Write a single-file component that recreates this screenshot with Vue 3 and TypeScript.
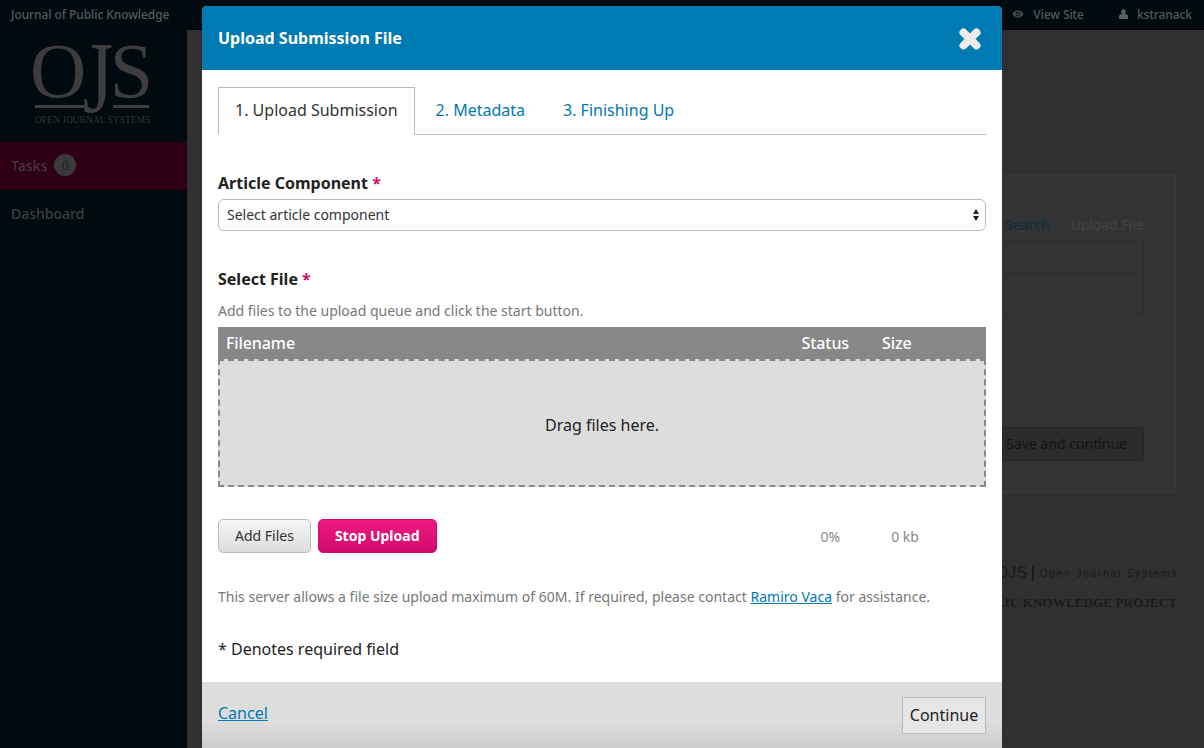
<template>
  <div class="page">
    <header class="topbar">
      <span class="journal">Journal of Public Knowledge</span>
      <nav class="user-nav">
        <span class="nav-item">
          <svg class="nav-icon" width="12" height="8" viewBox="0 0 14 10">
            <path d="M0 5C2 1.800 4.400.4 7 .4S12 1.800 14 5c-2 3.200-4.400 4.600-7 4.600S2 8.200 0 5z" fill="#45494b" />
            <circle cx="7" cy="5" r="2.900" fill="#010a0f" />
            <circle cx="7" cy="5" r="1.900" fill="#45494b" />
          </svg>
          View Site
        </span>
        <span class="nav-item">
          <svg class="nav-icon" width="9" height="10" viewBox="0 0 10 11">
            <circle cx="5" cy="3" r="2.700" fill="#5a5e60" />
            <path d="M0 11V8.200C0 6.500 1.500 5.500 3 5.500h4c1.500 0 3 1 3 2.700V11z" fill="#5a5e60" />
          </svg>
          kstranack
        </span>
      </nav>
    </header>

    <div class="shell">
      <aside class="sidebar">
        <div class="logo">
          <div class="logo-mark">O<span class="logo-j">J</span>S</div>
          <div class="logo-rule"><i></i><i></i></div>
          <div class="logo-sub">OPEN JOURNAL SYSTEMS</div>
        </div>
        <div class="side-link active">Tasks <span class="badge">0</span></div>
        <div class="side-link">Dashboard</div>
      </aside>

      <main class="content">
        <section class="card">
          <div class="card-tabs">
            <span class="card-search">Search</span>
            <span>Upload File</span>
          </div>
          <div class="card-table">
            <div class="card-row"></div>
            <div class="card-row"></div>
          </div>
          <div class="card-actions">
            <span class="card-button">Save and continue</span>
          </div>
        </section>
        <footer class="brand">
          <div class="brand-top">
            <span class="brand-ojs">OJS</span>
            <span class="brand-name">Open Journal Systems</span>
          </div>
          <div class="brand-pkp">PUBLIC KNOWLEDGE PROJECT</div>
        </footer>
      </main>
    </div>

    <div class="modal">
      <div class="modal-head">
        <h2>Upload Submission File</h2>
        <svg class="close" width="24" height="24" viewBox="0 0 24 24">
          <path d="M5.500 5.500L18.500 18.500M18.500 5.500L5.500 18.500" stroke="#ececec" stroke-width="8" stroke-linecap="round" fill="none" />
        </svg>
      </div>

      <div class="modal-body">
        <ul class="tabs">
          <li v-for="(tab, i) in tabs" :key="tab" class="tab" :class="{ current: i === 0 }">{{ tab }}</li>
        </ul>

        <label class="field-label">Article Component <em>*</em></label>
        <div class="select">
          <span>Select article component</span>
          <svg width="6" height="12" viewBox="0 0 6 12">
            <path d="M3 0l3 5H0zM3 12L0 7h6z" fill="#222" />
          </svg>
        </div>

        <label class="field-label file-label">Select File <em>*</em></label>
        <p class="helper">Add files to the upload queue and click the start button.</p>

        <div class="uploader">
          <div class="uploader-head">
            <span class="col-name">Filename</span>
            <span class="col-status">Status</span>
            <span class="col-size">Size</span>
          </div>
          <div class="dropzone">Drag files here.</div>
        </div>

        <div class="upload-actions">
          <button class="btn">Add Files</button>
          <button class="btn primary">Stop Upload</button>
          <span class="percent">0%</span>
          <span class="kb">0 kb</span>
        </div>

        <p class="notice">
          This server allows a file size upload maximum of 60M. If required, please contact
          <a>Ramiro Vaca</a> for assistance.
        </p>

        <p class="required">* Denotes required field</p>
      </div>

      <div class="modal-foot">
        <a class="cancel">Cancel</a>
        <button class="continue">Continue</button>
      </div>
    </div>
  </div>
</template>

<script setup lang="ts">
const tabs: string[] = ["1. Upload Submission", "2. Metadata", "3. Finishing Up"];
</script>

<style>
html,
body {
  margin: 0;
  overflow: hidden;
  background: #303030;
}
</style>

<style scoped>
.page {
  position: relative;
  width: 1204px;
  height: 748px;
  overflow: hidden;
  font-family: "Noto Sans", sans-serif;
  background: #303030;
}

.topbar {
  height: 30px;
  box-sizing: border-box;
  background: #010a0f;
  display: flex;
  align-items: center;
  justify-content: space-between;
  font-size: 12px;
  font-weight: 500;
  letter-spacing: -0.08px;
  color: #55595b;
  padding: 0 12px 2px 11px;
}
.user-nav {
  display: flex;
  gap: 35px;
}
.nav-item {
  display: flex;
  align-items: center;
  gap: 9px;
}

.shell {
  display: flex;
  height: 718px;
}
.sidebar {
  width: 187px;
  flex: none;
  background: #010a0f;
}
.logo {
  height: 112px;
  padding: 10px 0 0 30px;
  box-sizing: border-box;
  color: #3d3d3d;
  font-family: "Liberation Serif", serif;
}
.logo-mark {
  font-size: 78px;
  line-height: 62px;
  letter-spacing: -3.500px;
  white-space: nowrap;
}
.logo-j {
  display: inline-block;
  line-height: 46px;
  transform: scaleY(1.3);
  transform-origin: 50% 0;
}
.logo-rule {
  width: 114px;
  height: 3px;
  margin: 3px 0 0 5px;
  display: flex;
  justify-content: space-between;
}
.logo-rule i {
  display: block;
  width: 53px;
  background: #3d3d3d;
}
.logo-rule i + i {
  width: 36px;
}
.logo-sub {
  font-size: 9.500px;
  line-height: 12px;
  margin: 6px 0 0 5px;
  white-space: nowrap;
  color: #333;
}
.side-link {
  height: 48px;
  box-sizing: border-box;
  padding: 0 0 2px 11px;
  display: flex;
  align-items: center;
  gap: 7px;
  font-size: 14px;
  font-weight: 500;
  color: #3b3e40;
}
.side-link.active {
  background: #2e0015;
  color: #4d3440;
}
.badge {
  width: 22px;
  height: 22px;
  border-radius: 50%;
  background: #3a3a3a;
  color: #1e1e1e;
  font-size: 12px;
  font-weight: 400;
  display: flex;
  align-items: center;
  justify-content: center;
}

.content {
  flex: 1;
  padding: 144px 28px 0 28px;
}
.card {
  height: 319px;
  box-sizing: border-box;
  background: #333;
  border: 1px solid #3a3a3a;
  padding: 33px 31px 0 32px;
  font-size: 14px;
  color: #444;
}
.card-tabs {
  display: flex;
  justify-content: flex-end;
  gap: 21px;
  height: 32px;
  line-height: 34px;
}
.card-search {
  color: #0d2c3e;
}
.card-table {
  border-top: 1px solid #2d2d2d;
}
.card-row {
  height: 32px;
  box-sizing: border-box;
  border-bottom: 1px solid #2d2d2d;
  border-right: 1px solid #2d2d2d;
}
.card-row + .card-row {
  height: 41px;
}
.card-actions {
  display: flex;
  justify-content: flex-end;
  margin-top: 113px;
}
.card-button {
  height: 34px;
  line-height: 32px;
  box-sizing: border-box;
  padding: 0 16px;
  background: #2c2c2c;
  border: 1px solid #272727;
  border-radius: 4px;
  color: #141414;
}
.brand {
  margin-top: 65px;
  color: #1b1b1b;
  text-align: right;
}
.brand-top {
  display: flex;
  justify-content: flex-end;
  align-items: center;
  height: 30px;
  margin-right: -2px;
  font-family: "Liberation Sans", sans-serif;
}
.brand-ojs {
  font-size: 16px;
  padding-right: 5px;
  border-right: 2px solid #1b1b1b;
  line-height: 16px;
  margin-right: 6px;
}
.brand-name {
  font-size: 10px;
  letter-spacing: 1.850px;
}
.brand-pkp {
  font-family: "Liberation Serif", serif;
  font-size: 13.200px;
  font-weight: 700;
  margin: 7px -1px 0 0;
  white-space: nowrap;
}

.modal {
  position: absolute;
  left: 202px;
  top: 6px;
  width: 800px;
  height: 742px;
  background: #fff;
  border-radius: 5px 5px 0 0;
  display: flex;
  flex-direction: column;
  overflow: hidden;
  color: #222;
}
.modal-head {
  height: 64px;
  flex: none;
  background: #007ab2;
  display: flex;
  align-items: center;
  justify-content: space-between;
  padding: 0 20px 0 16px;
}
.modal-head h2 {
  margin: 0;
  font-size: 16px;
  font-weight: 700;
  color: #fff;
}
.close {
  margin-top: 1px;
}
.modal-body {
  flex: 1;
  padding: 17px 16px 0;
}
.tabs {
  list-style: none;
  margin: 0;
  padding: 0;
  display: flex;
  height: 48px;
  box-sizing: border-box;
  border-bottom: 1px solid #bbb;
}
.tab {
  height: 48px;
  box-sizing: border-box;
  padding: 0 17px;
  line-height: 44px;
  font-size: 16px;
  color: #007ab2;
  border: 1px solid transparent;
}
.tab + .tab {
  margin-left: 2px;
}
.tab.current {
  color: #333;
  background: #fff;
  border-color: #bbb #bbb #fff;
  padding: 0 16px;
  margin-right: 1px;
}
.field-label {
  display: block;
  margin-top: 36px;
  height: 24px;
  line-height: 24px;
  font-size: 16px;
  font-weight: 700;
  color: #222;
}
.field-label em {
  color: #d00a6c;
  font-style: normal;
}
.select {
  height: 32px;
  margin-top: 4px;
  box-sizing: border-box;
  border: 1px solid #bbb;
  border-radius: 6px;
  display: flex;
  align-items: center;
  justify-content: space-between;
  padding: 0 6px 2px 8px;
  font-size: 14px;
  color: #333;
}
.select svg {
  margin-top: 2px;
}
.helper {
  margin: 10px 0 0;
  height: 20px;
  line-height: 20px;
  font-size: 14px;
  color: #777;
}
.uploader {
  margin-top: 6px;
}
.uploader-head {
  height: 32px;
  background: #888;
  display: flex;
  align-items: center;
  font-size: 16px;
  font-weight: 500;
  letter-spacing: -0.1px;
  color: #fff;
  padding: 0 8px;
}
.col-name {
  flex: 1;
}
.col-status {
  margin-right: 33px;
}
.col-size {
  width: 96px;
}
.dropzone {
  height: 128px;
  box-sizing: border-box;
  padding-top: 4px;
  background: #ddd;
  border: 2px dashed #888;
  display: flex;
  align-items: center;
  justify-content: center;
  font-size: 16px;
  color: #222;
}
.upload-actions {
  display: flex;
  align-items: center;
  margin-top: 32px;
  gap: 7px;
  font-size: 14px;
  color: #888;
}
.btn {
  height: 34px;
  box-sizing: border-box;
  border: 1px solid #bbb;
  border-radius: 5px;
  padding: 0 16px 2px;
  background: linear-gradient(#f6f6f6, #ddd);
  font: 14px "Noto Sans", sans-serif;
  color: #333;
}
.btn.primary {
  border: 1px solid #d00a6c;
  background: linear-gradient(#ef1a80, #d00a6c);
  color: #fff;
  font-weight: 700;
}
.percent {
  margin-left: 377px;
}
.kb {
  margin-left: 44px;
}
.notice {
  margin: 34px 0 0;
  line-height: 20px;
  font-size: 14px;
  letter-spacing: 0.012px;
  color: #777;
}
.notice a {
  color: #007ab2;
  text-decoration: underline;
}
.required {
  margin: 30px 0 0;
  line-height: 24px;
  font-size: 16px;
  color: #222;
}
.modal-foot {
  height: 66px;
  flex: none;
  background: linear-gradient(#ddd 60%, #ccc);
  display: flex;
  align-items: center;
  justify-content: space-between;
  padding: 0 16px;
}
.cancel {
  font-size: 16px;
  color: #007ab2;
  text-decoration: underline;
  margin-bottom: 5px;
}
.continue {
  width: 84px;
  height: 37px;
  box-sizing: border-box;
  border: 1px solid #bbb;
  background: #e6e6e6;
  font: 16px "Noto Sans", sans-serif;
  color: #222;
  padding: 0 0 2px;
  margin-top: 1px;
}
</style>
